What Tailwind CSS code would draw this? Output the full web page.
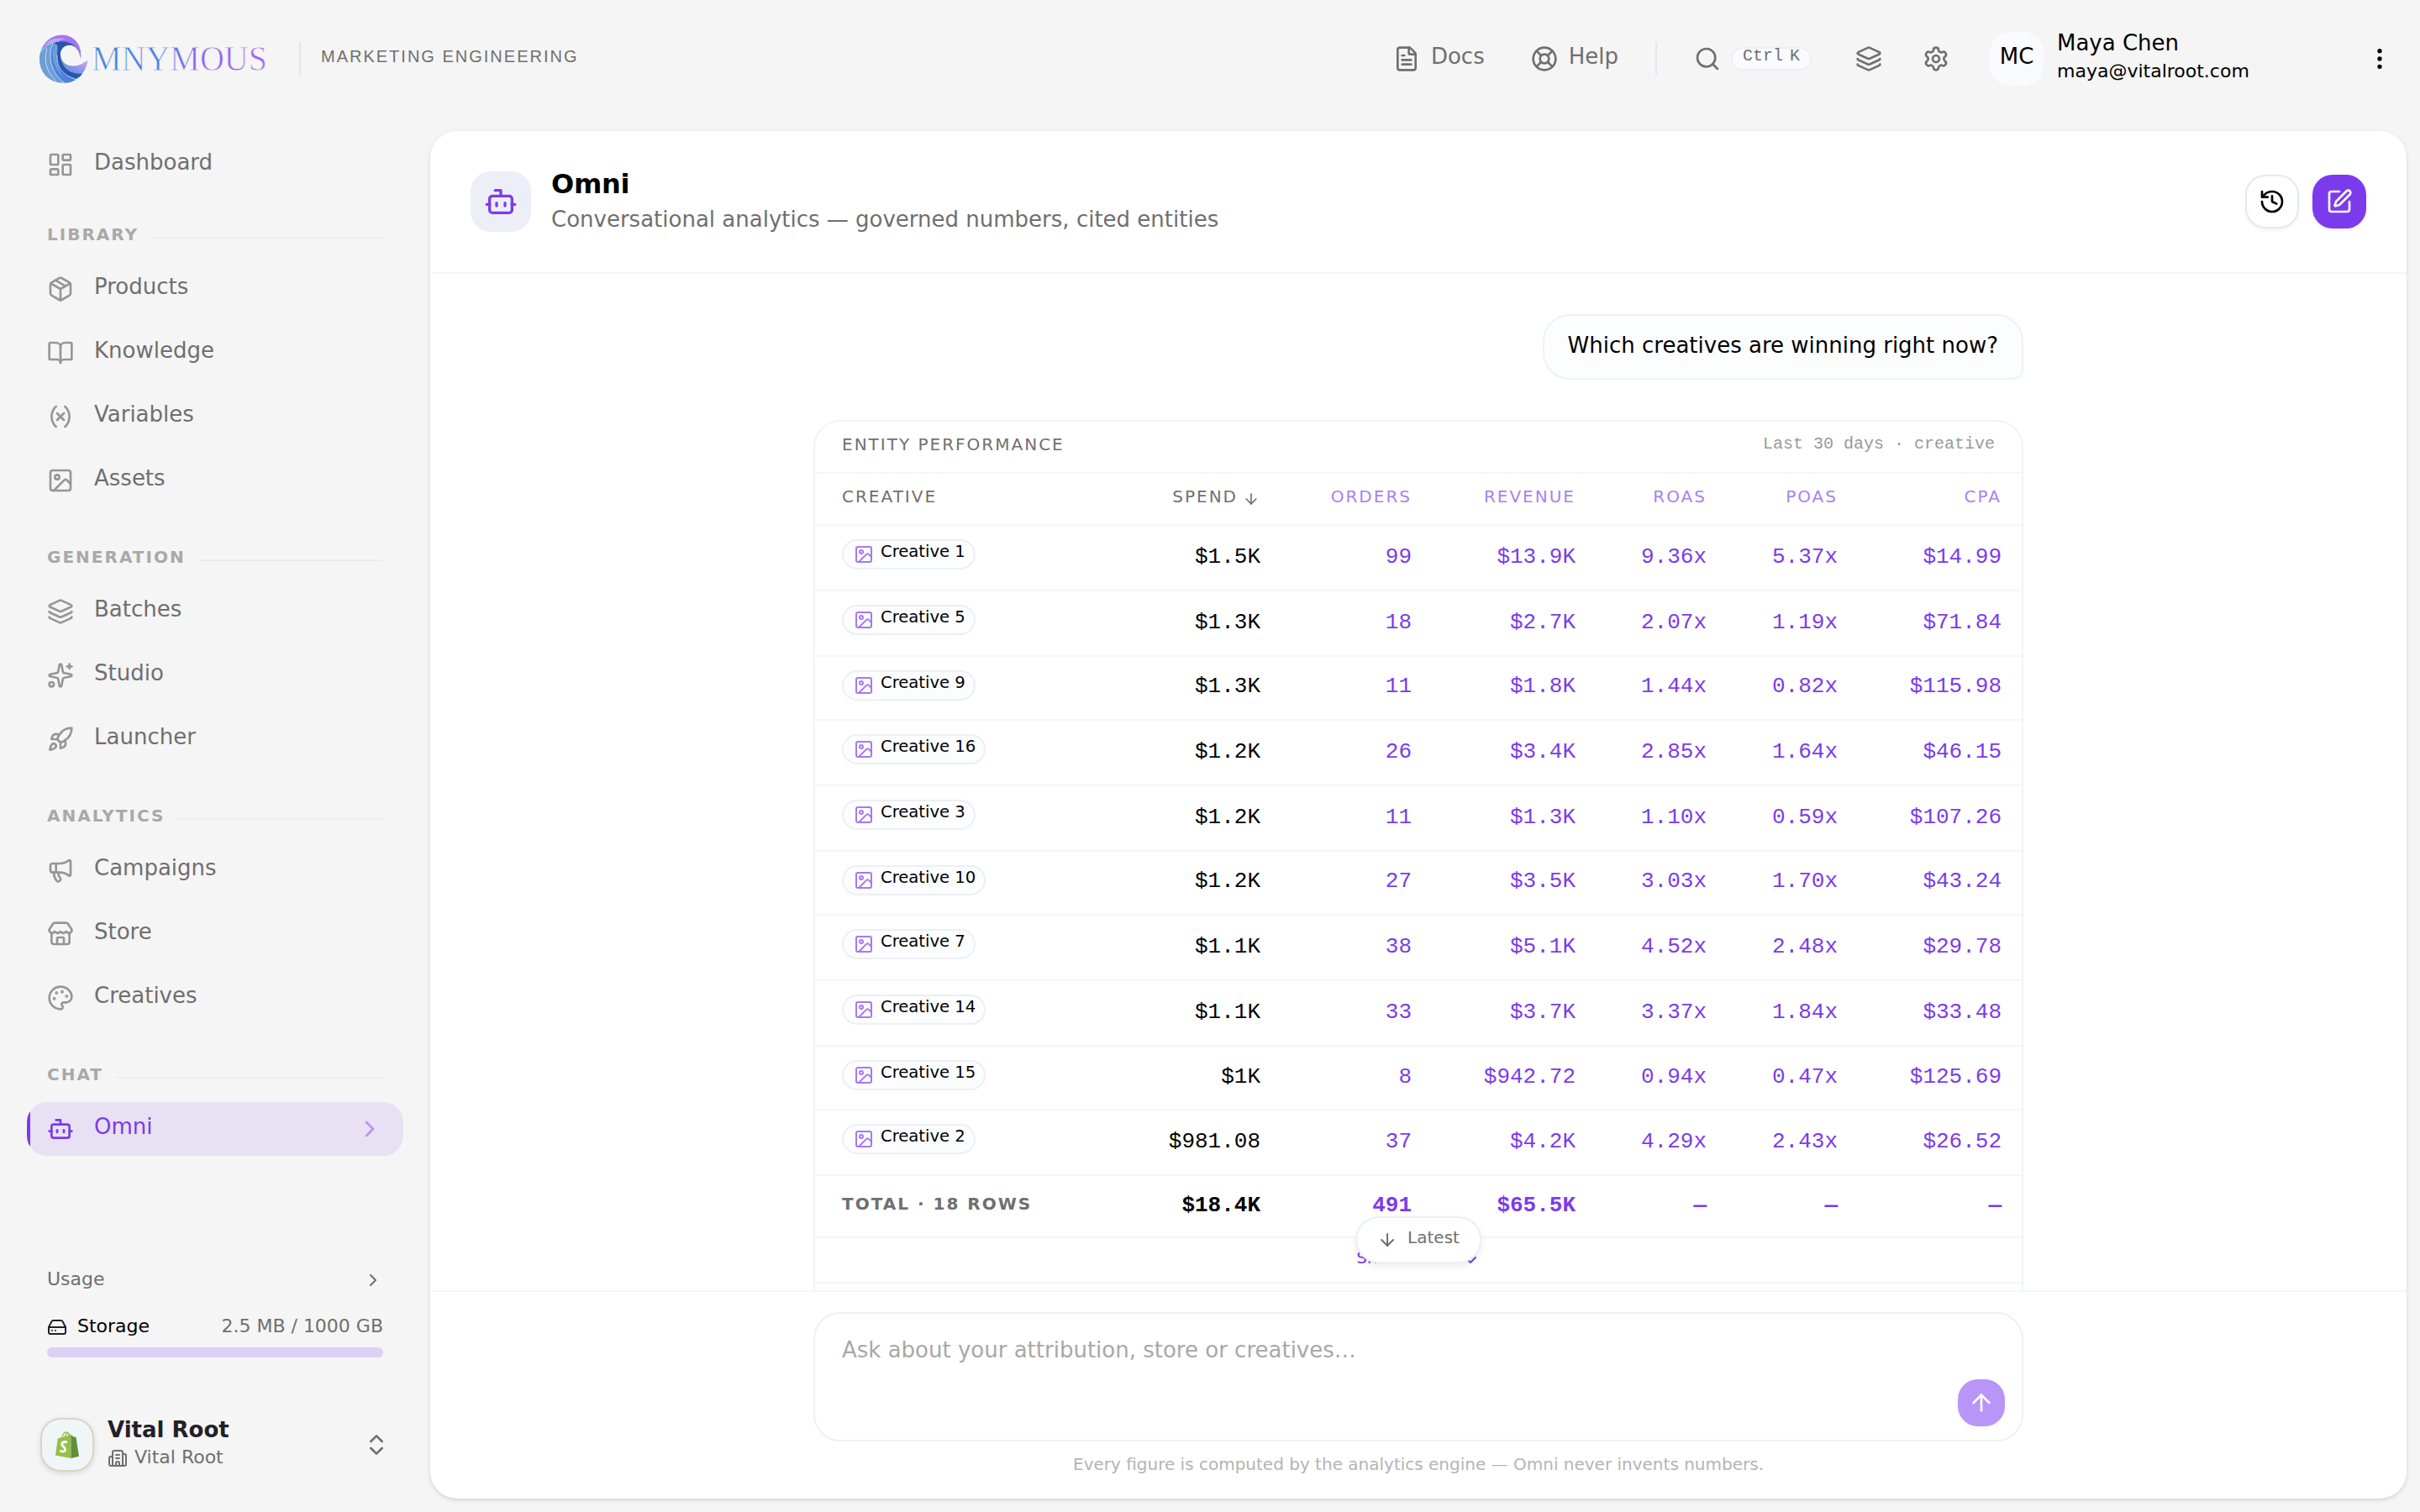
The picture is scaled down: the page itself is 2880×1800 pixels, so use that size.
<!DOCTYPE html>
<html lang="en">
<head>
    <meta charset="UTF-8">
    <meta name="viewport" content="width=device-width, initial-scale=1.0">
    <title>Omni - Omnymous</title>
    <script src="https://cdn.jsdelivr.net/npm/@tailwindcss/browser@4"></script>
</head>
<body class="bg-[#f5f5f5] w-[2880px] h-[1800px] overflow-hidden flex flex-col text-black text-[26px] font-['DejaVu_Sans',sans-serif]">

    <!-- Icon sprite -->
    <svg class="hidden">
        <symbol id="i-dashboard" viewBox="0 0 24 24"><rect width="7" height="9" x="3" y="3" rx="1"/><rect width="7" height="5" x="14" y="3" rx="1"/><rect width="7" height="9" x="14" y="12" rx="1"/><rect width="7" height="5" x="3" y="16" rx="1"/></symbol>
        <symbol id="i-package" viewBox="0 0 24 24"><path d="M11 21.73a2 2 0 0 0 2 0l7-4A2 2 0 0 0 21 16V8a2 2 0 0 0-1-1.73l-7-4a2 2 0 0 0-2 0l-7 4A2 2 0 0 0 3 8v8a2 2 0 0 0 1 1.73z"/><path d="M12 22V12"/><path d="M3.29 7 12 12l8.71-5"/><path d="m7.5 4.27 9 5.15"/></symbol>
        <symbol id="i-book" viewBox="0 0 24 24"><path d="M12 7v14"/><path d="M3 18a1 1 0 0 1-1-1V4a1 1 0 0 1 1-1h5a4 4 0 0 1 4 4 4 4 0 0 1 4-4h5a1 1 0 0 1 1 1v13a1 1 0 0 1-1 1h-6a3 3 0 0 0-3 3 3 3 0 0 0-3-3z"/></symbol>
        <symbol id="i-variable" viewBox="0 0 24 24"><path d="M8 21s-4-3-4-9 4-9 4-9"/><path d="M16 3s4 3 4 9-4 9-4 9"/><path d="m15 9-6 6"/><path d="m9 9 6 6"/></symbol>
        <symbol id="i-image" viewBox="0 0 24 24"><rect width="18" height="18" x="3" y="3" rx="2"/><circle cx="9" cy="9" r="2"/><path d="m21 15-3.086-3.086a2 2 0 0 0-2.828 0L6 21"/></symbol>
        <symbol id="i-layers" viewBox="0 0 24 24"><path d="M12.83 2.18a2 2 0 0 0-1.66 0L2.6 6.08a1 1 0 0 0 0 1.83l8.58 3.91a2 2 0 0 0 1.66 0l8.58-3.9a1 1 0 0 0 0-1.83z"/><path d="M2 12a1 1 0 0 0 .58.91l8.6 3.91a2 2 0 0 0 1.65 0l8.58-3.9A1 1 0 0 0 22 12"/><path d="M2 17a1 1 0 0 0 .58.91l8.6 3.91a2 2 0 0 0 1.65 0l8.58-3.9A1 1 0 0 0 22 17"/></symbol>
        <symbol id="i-sparkles" viewBox="0 0 24 24"><path d="M11.017 2.814a1 1 0 0 1 1.966 0l1.051 5.558a2 2 0 0 0 1.594 1.594l5.558 1.051a1 1 0 0 1 0 1.966l-5.558 1.051a2 2 0 0 0-1.594 1.594l-1.051 5.558a1 1 0 0 1-1.966 0l-1.051-5.558a2 2 0 0 0-1.594-1.594l-5.558-1.051a1 1 0 0 1 0-1.966l5.558-1.051a2 2 0 0 0 1.594-1.594z"/><path d="M20 2v4"/><path d="M22 4h-4"/><circle cx="4" cy="20" r="2"/></symbol>
        <symbol id="i-rocket" viewBox="0 0 24 24"><path d="M4.5 16.5c-1.5 1.26-2 5-2 5s3.74-.5 5-2c.71-.84.7-2.13-.09-2.91a2.18 2.18 0 0 0-2.91-.09z"/><path d="m12 15-3-3a22 22 0 0 1 2-3.95A12.88 12.88 0 0 1 22 2c0 2.72-.78 7.5-6 11a22.35 22.35 0 0 1-4 2z"/><path d="M9 12H4s.55-3.03 2-4c1.62-1.08 5 0 5 0"/><path d="M12 15v5s3.03-.55 4-2c1.08-1.62 0-5 0-5"/></symbol>
        <symbol id="i-megaphone" viewBox="0 0 24 24"><path d="M11 6a13 13 0 0 0 8.4-2.8A1 1 0 0 1 21 4v12a1 1 0 0 1-1.6.8A13 13 0 0 0 11 14H5a2 2 0 0 1-2-2V8a2 2 0 0 1 2-2z"/><path d="M6 14a12 12 0 0 0 2.4 7.2 2 2 0 0 0 3.2-2.4A8 8 0 0 1 10 14"/><path d="M8 6v8"/></symbol>
        <symbol id="i-store" viewBox="0 0 24 24"><path d="M15 21v-5a1 1 0 0 0-1-1h-4a1 1 0 0 0-1 1v5"/><path d="M17.774 10.31a1.12 1.12 0 0 0-1.549 0 2.5 2.5 0 0 1-3.451 0 1.12 1.12 0 0 0-1.548 0 2.5 2.5 0 0 1-3.452 0 1.12 1.12 0 0 0-1.549 0 2.5 2.5 0 0 1-3.77-3.248l2.889-4.184A2 2 0 0 1 7 2h10a2 2 0 0 1 1.653.873l2.895 4.192a2.5 2.5 0 0 1-3.774 3.244"/><path d="M4 10.95V19a2 2 0 0 0 2 2h12a2 2 0 0 0 2-2v-8.05"/></symbol>
        <symbol id="i-palette" viewBox="0 0 24 24"><path d="M12 22a1 1 0 0 1 0-20 10 9 0 0 1 10 9 5 5 0 0 1-5 5h-2.25a1.75 1.75 0 0 0-1.4 2.8l.3.4a1.75 1.75 0 0 1-1.4 2.8z"/><circle cx="13.5" cy="6.5" r=".5" fill="currentColor"/><circle cx="17.5" cy="10.5" r=".5" fill="currentColor"/><circle cx="6.5" cy="12.5" r=".5" fill="currentColor"/><circle cx="8.5" cy="7.5" r=".5" fill="currentColor"/></symbol>
        <symbol id="i-bot" viewBox="0 0 24 24"><path d="M12 8V4H8"/><rect width="16" height="12" x="4" y="8" rx="2"/><path d="M2 14h2"/><path d="M20 14h2"/><path d="M15 13v2"/><path d="M9 13v2"/></symbol>
        <symbol id="i-chevron-right" viewBox="0 0 24 24"><path d="m9 18 6-6-6-6"/></symbol>
        <symbol id="i-chevron-down" viewBox="0 0 24 24"><path d="m6 9 6 6 6-6"/></symbol>
        <symbol id="i-chevrons" viewBox="0 0 24 24"><path d="m7 15 5 5 5-5"/><path d="m7 9 5-5 5 5"/></symbol>
        <symbol id="i-drive" viewBox="0 0 24 24"><path d="M22 12H2"/><path d="M5.45 5.11 2 12v6a2 2 0 0 0 2 2h16a2 2 0 0 0 2-2v-6l-3.45-6.89A2 2 0 0 0 16.76 4H7.24a2 2 0 0 0-1.79 1.11z"/><path d="M6 16h.01"/><path d="M10 16h.01"/></symbol>
        <symbol id="i-building" viewBox="0 0 24 24"><path d="M10 12h4"/><path d="M10 8h4"/><path d="M14 21v-3a2 2 0 0 0-4 0v3"/><path d="M6 10H4a2 2 0 0 0-2 2v7a2 2 0 0 0 2 2h16a2 2 0 0 0 2-2V9a2 2 0 0 0-2-2h-2"/><path d="M6 21V5a2 2 0 0 1 2-2h8a2 2 0 0 1 2 2v16"/></symbol>
        <symbol id="i-file" viewBox="0 0 24 24"><path d="M6 22a2 2 0 0 1-2-2V4a2 2 0 0 1 2-2h8a2.4 2.4 0 0 1 1.704.706l3.588 3.588A2.4 2.4 0 0 1 20 8v12a2 2 0 0 1-2 2z"/><path d="M14 2v5a1 1 0 0 0 1 1h5"/><path d="M10 9H8"/><path d="M16 13H8"/><path d="M16 17H8"/></symbol>
        <symbol id="i-help" viewBox="0 0 24 24"><circle cx="12" cy="12" r="10"/><path d="m4.93 4.93 4.24 4.24"/><path d="m14.83 9.17 4.24-4.24"/><path d="m14.83 14.83 4.24 4.24"/><path d="m9.17 14.83-4.24 4.24"/><circle cx="12" cy="12" r="4"/></symbol>
        <symbol id="i-search" viewBox="0 0 24 24"><path d="m21 21-4.34-4.34"/><circle cx="11" cy="11" r="8"/></symbol>
        <symbol id="i-settings" viewBox="0 0 24 24"><path d="M9.671 4.136a2.34 2.34 0 0 1 4.659 0 2.34 2.34 0 0 0 3.319 1.915 2.34 2.34 0 0 1 2.33 4.033 2.34 2.34 0 0 0 0 3.831 2.34 2.34 0 0 1-2.33 4.033 2.34 2.34 0 0 0-3.319 1.915 2.34 2.34 0 0 1-4.659 0 2.34 2.34 0 0 0-3.32-1.915 2.34 2.34 0 0 1-2.33-4.033 2.34 2.34 0 0 0 0-3.831A2.34 2.34 0 0 1 6.35 6.051a2.34 2.34 0 0 0 3.319-1.915"/><circle cx="12" cy="12" r="3"/></symbol>
        <symbol id="i-more" viewBox="0 0 24 24"><circle cx="12" cy="12" r="1"/><circle cx="12" cy="5" r="1"/><circle cx="12" cy="19" r="1"/></symbol>
        <symbol id="i-history" viewBox="0 0 24 24"><path d="M3 12a9 9 0 1 0 9-9 9.75 9.75 0 0 0-6.74 2.74L3 8"/><path d="M3 3v5h5"/><path d="M12 7v5l4 2"/></symbol>
        <symbol id="i-edit" viewBox="0 0 24 24"><path d="M12 3H5a2 2 0 0 0-2 2v14a2 2 0 0 0 2 2h14a2 2 0 0 0 2-2v-7"/><path d="M18.375 2.625a1 1 0 0 1 3 3l-9.013 9.014a2 2 0 0 1-.853.505l-2.873.84a.5.5 0 0 1-.62-.62l.84-2.873a2 2 0 0 1 .506-.852z"/></symbol>
        <symbol id="i-down" viewBox="0 0 24 24"><path d="M12 5v14"/><path d="m19 12-7 7-7-7"/></symbol>
        <symbol id="i-up" viewBox="0 0 24 24"><path d="m5 12 7-7 7 7"/><path d="M12 19V5"/></symbol>
    </svg>

    <!-- Top bar -->
    <header class="h-[140px] shrink-0 flex items-center justify-between pl-[46px] pr-8 text-[#6f6f6f]">
        <div class="flex items-center">
            <svg class="w-[280px] h-[60px] overflow-visible" viewBox="0 0 280 60">
                <defs>
                    <linearGradient id="word" gradientUnits="userSpaceOnUse" x1="63" y1="0" x2="271" y2="24">
                        <stop offset="0" stop-color="#4a86e0"/>
                        <stop offset=".42" stop-color="#4c82e2"/>
                        <stop offset=".62" stop-color="#8f62f6"/>
                        <stop offset="1" stop-color="#a566f2"/>
                    </linearGradient>
                    <linearGradient id="tail" x1="0" y1="1" x2="1" y2="0">
                        <stop offset="0" stop-color="#6f7fe6"/>
                        <stop offset="1" stop-color="#c9aef6"/>
                    </linearGradient>
                </defs>
                <g transform="translate(1 1.7)">
                    <path fill="#6b9fd6" d="M57 30C55 46 44 57 28.500 57C12 57 0 45 0 29C0 12 13 0 27 0C41 0 51 12 49 28C48 17 43 12 36 12C29 12 24 17 25 24C26 33 33 37 40 37C47 37 52 34 57 30Z"/>
                    <path fill="#4b82de" d="M16 10C10 26 13 46 30 57C38 57 45 53 50 47C32 50 20 38 21 24C21 18 24 13 29 10Z"/>
                    <path fill="#6b9fd6" d="M17 11C13 24 17 40 28 50C24 42 20 34 21 24C21 18 24 13 29 10Z"/>
                    <path fill="#a674f2" d="M3 16C8 5 17 0 27 0C41 0 51 12 49 28C47 14 38 7 25 7C15 7 8 11 3 16Z"/>
                    <path fill="#c7a8f8" d="M5 13C12 4 22 2 32 5C26 5 13 7 5 13Z"/>
                    <path fill="#2b55ad" d="M17 9C34 4 47 12 49 28C47 17 42 12 36 12C28 12 24 18 25 25C26 38 36 47 51 46C48 50 44 52 41 51C27 48 19 37 21 24C21 17 24 11 17 9Z"/>
                    <path fill="url(#tail)" d="M57 30C52 34 47 37 40 37C36 37 33 36 30 34C34 42 44 46 53 43C55 39 57 35 57 30Z"/>
                    <g fill="none" stroke="#dcebf9" stroke-width=".8">
                        <path d="M16 10C9 26 14 46 30 57"/>
                        <path d="M9 16C5 30 8 44 20 55"/>
                        <path d="M21 24C20 38 28 48 44 53"/>
                        <path d="M2 20C8 11 15 8 24 7"/>
                    </g>
                </g>
                <text x="63" y="44" font-family="Liberation Serif, serif" font-size="42" textLength="209" lengthAdjust="spacingAndGlyphs" fill="url(#word)" stroke="#f5f5f5" stroke-width=".9">MNYMOUS</text>
            </svg>
            <div class="w-0.5 h-10 bg-[#e4e7f0] ml-[30px]"></div>
            <span class="ml-6 pb-1.5 text-[20px] leading-7 tracking-[2px] font-['Liberation_Sans',sans-serif]">MARKETING ENGINEERING</span>
        </div>
        <div class="flex items-center">
            <svg class="size-8 fill-none stroke-current stroke-2 [stroke-linecap:round] [stroke-linejoin:round]"><use href="#i-file"/></svg>
            <span class="ml-[13px] pb-1.5">Docs</span>
            <svg class="ml-[55px] size-8 fill-none stroke-current stroke-2 [stroke-linecap:round] [stroke-linejoin:round]"><use href="#i-help"/></svg>
            <span class="ml-[13px] pb-1.5">Help</span>
            <div class="ml-11 w-0.5 h-10 bg-[#e4e7f0]"></div>
            <svg class="ml-11 size-8 fill-none stroke-current stroke-2 [stroke-linecap:round] [stroke-linejoin:round]"><use href="#i-search"/></svg>
            <kbd class="ml-3 w-24 h-7 border-2 border-[#edeff8] bg-[#fafbfe] rounded-full flex items-center justify-center gap-2 pb-1.5 text-[20px] leading-none font-['Liberation_Mono',monospace]"><span>Ctrl</span><span>K</span></kbd>
            <svg class="ml-[52px] size-8 fill-none stroke-current stroke-2 [stroke-linecap:round] [stroke-linejoin:round]"><use href="#i-layers"/></svg>
            <svg class="ml-12 size-8 fill-none stroke-current stroke-2 [stroke-linecap:round] [stroke-linejoin:round]"><use href="#i-settings"/></svg>
            <div class="ml-12 size-16 rounded-3xl bg-[#fafbfe] flex items-center justify-center pb-1.5 text-black">MC</div>
            <div class="ml-4 w-[368px] pb-1.5 text-black">
                <div class="leading-8">Maya Chen</div>
                <div class="mt-1 text-[22px] leading-7">maya@vitalroot.com</div>
            </div>
            <svg class="size-8 text-black fill-none stroke-current stroke-2 [stroke-linecap:round] [stroke-linejoin:round]"><use href="#i-more"/></svg>
        </div>
    </header>

    <div class="flex-1 min-h-0 flex">
        <!-- Sidebar -->
        <aside class="w-[512px] shrink-0 flex flex-col pt-6 pb-12 px-8">
            <nav id="nav" class="flex flex-col text-[#6f6f6f]"></nav>

            <div class="mt-auto px-6 text-[22px]">
                <div class="h-6 flex items-center justify-between text-[#6f6f6f]">
                    <span class="pb-[3px]">Usage</span>
                    <svg class="size-6 fill-none stroke-current stroke-2 [stroke-linecap:round] [stroke-linejoin:round]"><use href="#i-chevron-right"/></svg>
                </div>
                <div class="mt-8 h-6 flex items-center">
                    <svg class="size-6 text-[#231f29] fill-none stroke-current stroke-2 [stroke-linecap:round] [stroke-linejoin:round]"><use href="#i-drive"/></svg>
                    <span class="ml-3 pb-[3px]">Storage</span>
                    <span class="ml-auto pb-[3px] text-[#6f6f6f]">2.5 MB / 1000 GB</span>
                </div>
                <div class="mt-3 h-3 rounded-full bg-[#ddd0f6]"></div>
            </div>

            <div class="mt-[72px] h-16 pl-4 flex items-center">
                <div class="size-16 rounded-3xl border-2 border-[#dcd4c3] bg-[#f0f5f8] shadow-[0_2px_6px_rgba(0,0,0,0.12)] flex items-center justify-center">
                    <svg class="w-7 h-8" viewBox="0 0 28 32">
                        <path fill="none" stroke="#95bf47" stroke-width="1.300" d="M7.500 9C8 4 10.500 1 13 1C16 1 16.500 5 16.500 8M11 8.500C11.500 4 13.500 2 15.500 2.500C17 3 17.500 5 17.500 7"/>
                        <path fill="#95bf47" d="M2.800 8.500L18.500 4L18.500 32L0 28.500Z"/>
                        <path fill="#5e8e3e" d="M18.500 4L21.500 6.500L24.500 7L28 29.800L18.500 32Z"/>
                        <path fill="none" stroke="#fff" stroke-width="2.900" d="M13.800 13.200C11 11.700 8 12.500 7.700 15C7.500 18 12 18.200 11.500 21.700C11.200 24.500 8 24.800 5.300 22.900"/>
                    </svg>
                </div>
                <div class="ml-4 pb-1.5">
                    <div class="font-bold leading-8 text-[#231f29]">Vital Root</div>
                    <div class="mt-0.5 h-7 flex items-center text-[22px] text-[#6f6f6f]">
                        <svg class="mt-1 size-6 fill-none stroke-current stroke-2 [stroke-linecap:round] [stroke-linejoin:round]"><use href="#i-building"/></svg>
                        <span class="ml-2">Vital Root</span>
                    </div>
                </div>
                <svg class="ml-auto mr-4 size-8 text-[#6f6f6f] fill-none stroke-current stroke-2 [stroke-linecap:round] [stroke-linejoin:round]"><use href="#i-chevrons"/></svg>
            </div>
        </aside>

        <!-- Chat panel -->
        <main class="flex-1 mt-4 mr-4 mb-4 bg-white rounded-[32px] shadow-[0_2px_6px_rgba(0,0,0,0.1),0_2px_4px_-2px_rgba(0,0,0,0.12)] flex flex-col overflow-hidden">
            <div class="h-[170px] shrink-0 border-b-2 border-[#f5f6fb] px-12 flex items-center">
                <div class="size-[72px] rounded-3xl bg-[#edeff8] flex items-center justify-center text-[#7c3aed]">
                    <svg class="size-10 fill-none stroke-current stroke-2 [stroke-linecap:round] [stroke-linejoin:round]"><use href="#i-bot"/></svg>
                </div>
                <div class="ml-6 pb-[2px]">
                    <h1 class="text-[32px] leading-10 font-bold tracking-[-0.3px]">Omni</h1>
                    <p class="mt-1 leading-9 text-[#6f6f6f]">Conversational analytics — governed numbers, cited entities</p>
                </div>
                <button class="ml-auto size-16 rounded-3xl border-2 border-[#e6e9f2] bg-white shadow-[0_2px_4px_rgba(0,0,0,0.05)] flex items-center justify-center">
                    <svg class="size-8 fill-none stroke-current stroke-2 [stroke-linecap:round] [stroke-linejoin:round]"><use href="#i-history"/></svg>
                </button>
                <button class="ml-4 size-16 rounded-3xl bg-[#7c3aed] text-white shadow-[0_2px_4px_rgba(0,0,0,0.08)] flex items-center justify-center">
                    <svg class="size-8 fill-none stroke-current stroke-2 [stroke-linecap:round] [stroke-linejoin:round]"><use href="#i-edit"/></svg>
                </button>
            </div>

            <!-- Conversation -->
            <div class="relative flex-1 min-h-0 overflow-hidden">
                <div class="w-[1440px] mx-auto pt-12 flex flex-col">
                    <div class="self-end h-[78px] px-7 pb-1 border-2 border-[#eef1f8] bg-[#fcfdff] rounded-[32px] rounded-br-[12px] flex items-center">Which creatives are winning right now?</div>

                    <div class="mt-12 border-2 border-[#f0f3f9] rounded-[32px] overflow-hidden">
                        <div class="h-[62px] pl-8 pr-8 pb-1.5 border-b-2 border-[#f5f6fb] flex items-center justify-between text-[20px]">
                            <span class="tracking-[2px] text-[#6f6f6f]">ENTITY PERFORMANCE</span>
                            <span class="text-[#999] font-['Liberation_Mono',monospace]">Last 30 days · creative</span>
                        </div>
                        <div class="grid grid-cols-[359px_197px_178px_195px_156px_156px_195px] h-[62px] pb-1.5 items-center border-b-2 border-[#f5f6fb] text-[20px] tracking-[2px] text-right text-[#a97ff3]">
                            <span class="pl-8 text-left text-[#6f6f6f]">CREATIVE</span>
                            <span class="pr-[27px] flex items-center justify-end gap-1.5 text-[#6f6f6f]">SPEND
                                <svg class="mt-1.5 size-5 fill-none stroke-current stroke-2 [stroke-linecap:round] [stroke-linejoin:round]"><use href="#i-down"/></svg>
                            </span>
                            <span class="pr-6">ORDERS</span>
                            <span class="pr-6">REVENUE</span>
                            <span class="pr-6">ROAS</span>
                            <span class="pr-6">POAS</span>
                            <span class="pr-6">CPA</span>
                        </div>
                        <div id="rows"></div>
                        <div class="grid grid-cols-[359px_197px_178px_195px_156px_156px_195px] h-[74px] items-center border-b-2 border-[#f5f6fb] text-right font-bold text-[#7c3aed] font-['Liberation_Mono',monospace]">
                            <span class="pl-8 pb-1.5 text-left text-[20px] tracking-[2px] text-[#6f6f6f] font-['DejaVu_Sans',sans-serif]">TOTAL · 18 ROWS</span>
                            <span class="pr-[26px] pb-0.5 text-black">$18.4K</span>
                            <span class="pr-6 pb-0.5">491</span>
                            <span class="pr-6 pb-0.5">$65.5K</span>
                            <span class="pr-6 pb-0.5">—</span>
                            <span class="pr-6 pb-0.5">—</span>
                            <span class="pr-6 pb-0.5">—</span>
                        </div>
                        <div class="h-[54px] border-b-2 border-[#f5f6fb] flex items-center justify-center gap-2 text-[20px] text-[#7c3aed]">
                            <span class="pb-1.5">Show all 18</span>
                            <svg class="size-6 fill-none stroke-current stroke-2 [stroke-linecap:round] [stroke-linejoin:round]"><use href="#i-chevron-down"/></svg>
                        </div>
                        <div class="h-16"></div>
                    </div>
                </div>

                <button class="absolute bottom-8 left-1/2 -translate-x-1/2 h-14 px-6 border-2 border-[#eceff7] rounded-full bg-white shadow-[0_4px_8px_rgba(0,0,0,0.07)] flex items-center gap-3 text-[20px] text-[#6f6f6f]">
                    <svg class="size-6 fill-none stroke-current stroke-2 [stroke-linecap:round] [stroke-linejoin:round]"><use href="#i-down"/></svg>
                    <span class="pb-1.5">Latest</span>
                </button>
            </div>

            <!-- Composer -->
            <div class="h-[248px] shrink-0 border-t-2 border-[#f5f6fb] pt-6">
                <div class="w-[1440px] h-[154px] mx-auto border-2 border-[#edf0f7] rounded-[32px] pl-8 pr-5 pb-4 flex items-end">
                    <textarea class="flex-1 self-stretch pt-[23px] leading-10 resize-none outline-none placeholder:text-[#a8a8a8]" placeholder="Ask about your attribution, store or creatives…"></textarea>
                    <button class="size-14 rounded-[24px] bg-[#b895f6] text-white shadow-[0_2px_4px_rgba(0,0,0,0.04)] flex items-center justify-center">
                        <svg class="size-8 fill-none stroke-current stroke-2 [stroke-linecap:round] [stroke-linejoin:round]"><use href="#i-up"/></svg>
                    </button>
                </div>
                <p class="mt-[13px] text-center text-[20px] leading-7 text-[#b4b4b4]">Every figure is computed by the analytics engine — Omni never invents numbers.</p>
            </div>
        </main>
    </div>

    <script>
        const nav = [
            { items: [['dashboard', 'Dashboard']] },
            { title: 'Library', items: [['package', 'Products'], ['book', 'Knowledge'], ['variable', 'Variables'], ['image', 'Assets']] },
            { title: 'Generation', items: [['layers', 'Batches'], ['sparkles', 'Studio'], ['rocket', 'Launcher']] },
            { title: 'Analytics', items: [['megaphone', 'Campaigns'], ['store', 'Store'], ['palette', 'Creatives']] },
            { title: 'Chat', items: [['bot', 'Omni']] }
        ];

        const rows = [
            ['Creative 1', '$1.5K', '99', '$13.9K', '9.36x', '5.37x', '$14.99'],
            ['Creative 5', '$1.3K', '18', '$2.7K', '2.07x', '1.19x', '$71.84'],
            ['Creative 9', '$1.3K', '11', '$1.8K', '1.44x', '0.82x', '$115.98'],
            ['Creative 16', '$1.2K', '26', '$3.4K', '2.85x', '1.64x', '$46.15'],
            ['Creative 3', '$1.2K', '11', '$1.3K', '1.10x', '0.59x', '$107.26'],
            ['Creative 10', '$1.2K', '27', '$3.5K', '3.03x', '1.70x', '$43.24'],
            ['Creative 7', '$1.1K', '38', '$5.1K', '4.52x', '2.48x', '$29.78'],
            ['Creative 14', '$1.1K', '33', '$3.7K', '3.37x', '1.84x', '$33.48'],
            ['Creative 15', '$1K', '8', '$942.72', '0.94x', '0.47x', '$125.69'],
            ['Creative 2', '$981.08', '37', '$4.2K', '4.29x', '2.43x', '$26.52']
        ];

        function icon(name, cls) {
            return `<svg class="${cls} shrink-0 fill-none stroke-current stroke-2 [stroke-linecap:round] [stroke-linejoin:round]"><use href="#i-${name}"/></svg>`;
        }

        // Render sidebar
        function navItem([ic, label]) {
            if (label === 'Omni') {
                return `
                <a class="relative overflow-hidden h-16 px-6 rounded-3xl bg-[#e8e1f4] text-[#7c3aed] flex items-center">
                    <span class="absolute left-0 top-3 w-1 h-10 bg-[#7c3aed]"></span>
                    ${icon(ic, 'size-8')}
                    <span class="ml-6 pb-1.5">${label}</span>
                    ${icon('chevron-right', 'size-8 ml-auto text-[#b694f5]')}
                </a>`;
            }
            return `
                <a class="h-16 px-6 flex items-center">
                    ${icon(ic, 'size-8 text-[#969696]')}
                    <span class="ml-6 pb-1.5">${label}</span>
                </a>`;
        }

        document.getElementById('nav').innerHTML = nav.map((group, i) => `
            ${group.title ? `
            <div class="${i === 1 ? 'mt-10' : 'mt-12'} mb-3.5 mx-6 h-[30px] flex items-center gap-4">
                <span class="pb-2 text-[20px] leading-none font-bold uppercase tracking-[2px] text-[#a9a9a9]">${group.title}</span>
                <span class="flex-1 h-0.5 bg-[#ebecf2]"></span>
            </div>` : ''}
            <div class="flex flex-col gap-3">${group.items.map(navItem).join('')}</div>
        `).join('');

        // Render table rows, every third one is a notch shorter
        document.getElementById('rows').innerHTML = rows.map((row, i) => `
            <div class="grid grid-cols-[359px_197px_178px_195px_156px_156px_195px] ${i % 3 === 2 ? 'h-[76px]' : 'h-[78px]'} items-center border-b-2 border-[#f5f6fb] text-right text-[#7c3aed] font-['Liberation_Mono',monospace]">
                <div class="pl-8 pt-4 self-start flex">
                    <span class="h-9 pl-3 pr-2.5 border-2 border-[#eceff8] bg-[#fcfdff] rounded-full flex items-center gap-2 text-[19.6px] text-black font-['DejaVu_Sans',sans-serif]">
                        ${icon('image', 'size-6 text-[#a678f3]')}
                        <span class="pb-1.5 leading-none">${row[0]}</span>
                    </span>
                </div>
                ${row.slice(1).map((v, c) => `<span class="${i === 2 || i === 5 ? 'pb-1' : 'pb-0.5'} ${c === 0 ? 'pr-[26px] text-black' : 'pr-6'}">${v}</span>`).join('')}
            </div>
        `).join('');
    </script>
</body>
</html>
